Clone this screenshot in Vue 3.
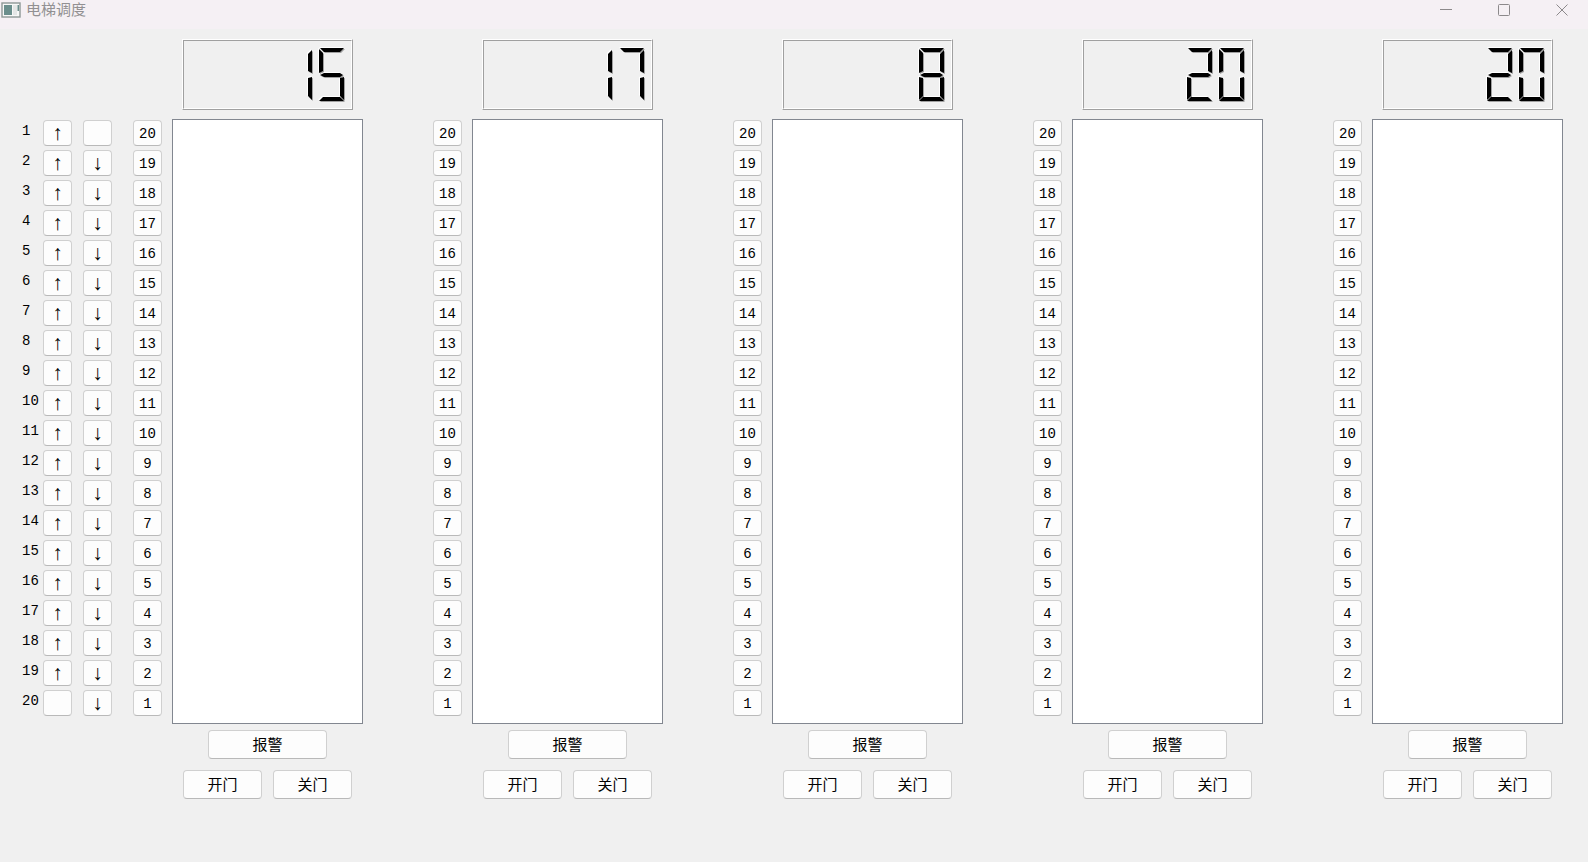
<script setup>
const TOP = 20
const ascending = Array.from({ length: TOP }, (_, i) => i + 1)
const descending = [...ascending].reverse()

const lifts = [
  { id: 1, floor: 15 },
  { id: 2, floor: 17 },
  { id: 3, floor: 8 },
  { id: 4, floor: 20 },
  { id: 5, floor: 20 },
]

const segments = {
  a: '2,2 26,2 22,6 6,6',
  b: '26,4 26,27 22,25 22,8',
  c: '26,31 26,54 22,50 22,32',
  d: '5,51 22,51 26,55 1,55',
  e: '1,31 5,32 5,50 1,54',
  f: '1,3 5,7 5,25 1,27',
  g: '2,29 6,27 22,27 25,29 22,31 6,31',
}

const lit = {
  0: 'abcdef', 1: 'bc', 2: 'abged', 3: 'abgcd', 4: 'fgbc',
  5: 'afgcd', 6: 'afgecd', 7: 'abc', 8: 'abcdefg', 9: 'abcdfg',
}

const digits = (n) => String(n).split('')
const shapes = (d) => lit[d].split('').map((s) => segments[s])
</script>

<template>
  <div class="window">
    <header class="titlebar">
      <svg class="app-icon" width="20" height="16" viewBox="0 0 20 16" aria-hidden="true">
        <rect x="1" y="1" width="18" height="14" fill="#f7f7f7" stroke="#8e9796" stroke-width="1.4" />
        <rect x="3" y="3" width="8" height="10" fill="#6a8e8c" />
        <rect x="12" y="3" width="4" height="10" fill="#e4e6e6" />
        <rect x="16.5" y="3" width="1.5" height="6" fill="#6a8e8c" />
      </svg>
      <span class="title">电梯调度</span>
      <div class="controls">
        <button type="button" aria-label="最小化">
          <svg width="12" height="12" viewBox="0 0 12 12"><path d="M0 5.5H12" /></svg>
        </button>
        <button type="button" aria-label="最大化">
          <svg width="12" height="12" viewBox="0 0 12 12"><rect x=".5" y=".5" width="11" height="11" rx="1" /></svg>
        </button>
        <button type="button" aria-label="关闭">
          <svg width="12" height="12" viewBox="0 0 12 12"><path d="M.5 .5L11.5 11.5M11.5 .5L.5 11.5" /></svg>
        </button>
      </div>
    </header>

    <main class="board">
      <section class="hall">
        <div v-for="n in ascending" :key="n" class="hall-row">
          <span class="floor-label">{{ n }}</span>
          <button type="button" class="btn key arrow" :aria-label="n + ' 上行'">{{ n < TOP ? '↑' : '' }}</button>
          <button type="button" class="btn key arrow" :aria-label="n + ' 下行'">{{ n > 1 ? '↓' : '' }}</button>
        </div>
      </section>

      <section v-for="lift in lifts" :key="lift.id" class="lift">
        <div class="floors">
          <button v-for="n in descending" :key="n" type="button" class="btn key">{{ n }}</button>
        </div>
        <div class="shaft">
          <div class="lcd">
            <div class="lcd-inner" role="img" :aria-label="String(lift.floor)">
              <svg v-for="(d, i) in digits(lift.floor)" :key="i" width="27" height="56" viewBox="0 0 27 56">
                <g class="light" transform="translate(-1 -1)">
                  <polygon v-for="p in shapes(d)" :key="p" :points="p" />
                </g>
                <g class="shade" transform="translate(1 1)">
                  <polygon v-for="p in shapes(d)" :key="p" :points="p" />
                </g>
                <g>
                  <polygon v-for="p in shapes(d)" :key="p" :points="p" />
                </g>
              </svg>
            </div>
          </div>
          <div class="log"></div>
          <button type="button" class="btn alarm">报警</button>
          <div class="doors">
            <button type="button" class="btn door">开门</button>
            <button type="button" class="btn door">关门</button>
          </div>
        </div>
      </section>
    </main>
  </div>
</template>

<style>
body {
  background: #f0f0f0;
}
</style>

<style scoped>
.window {
  min-height: 100vh;
  background: #f0f0f0;
  color: #000;
  font-family: "Liberation Mono", "Noto Sans CJK SC", monospace;
  font-size: 14px;
}

.titlebar {
  display: flex;
  align-items: flex-start;
  height: 29px;
  background: #f5f0f4;
}

.app-icon {
  margin: 2px 5px 0 1px;
}

.title {
  flex: 1;
  font-family: "Noto Sans CJK SC", sans-serif;
  font-size: 15px;
  line-height: 18px;
  color: #929092;
}

.controls {
  display: flex;
  gap: 6px;
}

.controls button {
  display: flex;
  align-items: center;
  justify-content: center;
  width: 52px;
  height: 20px;
  padding: 0;
  border: 0;
  background: none;
}

.controls svg {
  fill: none;
  stroke: #8c898b;
  stroke-width: 1;
}

.board {
  display: flex;
  justify-content: space-between;
  padding: 10px 25px 24px 22px;
}

.hall,
.floors {
  display: flex;
  flex-direction: column;
  gap: 4px;
  padding-top: 81px;
}

.hall-row {
  display: flex;
  width: 90px;
}

.floor-label {
  width: 21px;
  line-height: 22px;
}

.btn {
  box-sizing: border-box;
  padding: 0;
  border: 1px solid #d0d0d0;
  border-bottom-color: #b9b9b9;
  border-radius: 4px;
  background: #fdfdfd;
  color: #000;
  font: inherit;
  text-align: center;
}

.key {
  width: 29px;
  height: 26px;
  padding-top: 2px;
  line-height: 22px;
}

.arrow {
  padding-top: 0;
  font-family: "Liberation Serif", serif;
  font-size: 21px;
}

.hall-row .key + .key {
  margin-left: 11px;
}

.lift {
  display: flex;
  gap: 10px;
}

.hall + .lift {
  margin-left: 21px;
}

.lift + .lift {
  margin-left: auto;
}

.shaft {
  display: flex;
  flex-direction: column;
  align-items: center;
  width: 191px;
}

.lcd {
  box-sizing: border-box;
  width: 171px;
  border: 1px solid;
  border-color: #fff #a0a0a0 #a0a0a0 #fff;
}

.lcd-inner {
  display: flex;
  justify-content: flex-end;
  gap: 5px;
  padding: 5px 6px 6px;
  border: 1px solid;
  border-color: #a0a0a0 #fff #fff #a0a0a0;
}

.lcd svg {
  display: block;
}

.light {
  fill: #fff;
}

.shade {
  fill: #a0a0a0;
}

.log {
  box-sizing: border-box;
  width: 100%;
  height: 605px;
  margin-top: 9px;
  border: 1px solid #828790;
  background: #fff;
}

.alarm,
.door {
  height: 29px;
  padding-bottom: 2px;
  font-family: "Noto Sans CJK SC", sans-serif;
  font-size: 15px;
  line-height: 25px;
}

.alarm {
  width: 119px;
  margin-top: 6px;
}

.doors {
  display: flex;
  gap: 11px;
  margin-top: 11px;
}

.door {
  width: 79px;
}
</style>
